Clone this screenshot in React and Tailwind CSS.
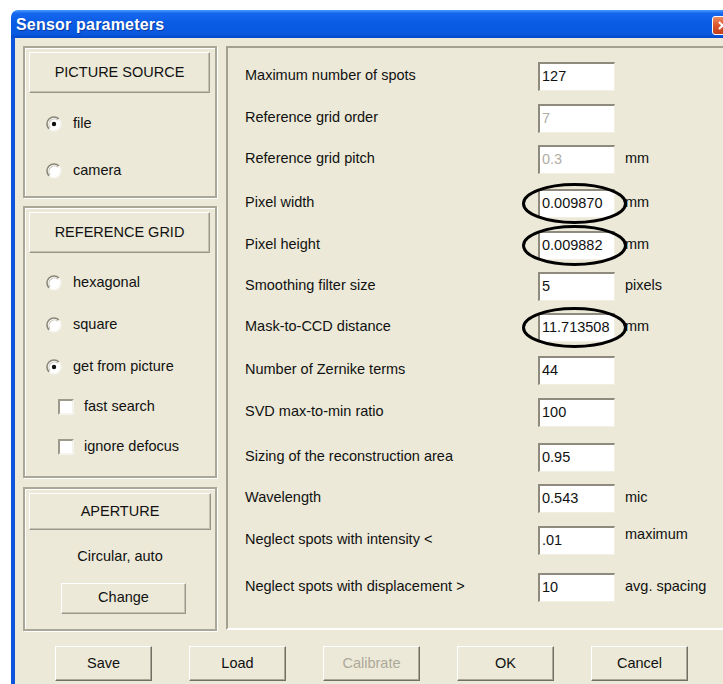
import React from 'react';

const rows = [
  { label: 'Maximum number of spots', value: '127', mt: 'mt-[13px]' },
  { label: 'Reference grid order', value: '7', disabled: true, mt: 'mt-[12px]' },
  { label: 'Reference grid pitch', value: '0.3', disabled: true, unit: 'mm', mt: 'mt-[11px]' },
  { label: 'Pixel width', value: '0.009870', unit: 'mm', ring: true, mt: 'mt-[14px]' },
  { label: 'Pixel height', value: '0.009882', unit: 'mm', ring: true, mt: 'mt-[12px]' },
  { label: 'Smoothing filter size', value: '5', unit: 'pixels', mt: 'mt-[11px]' },
  { label: 'Mask-to-CCD distance', value: '11.713508', unit: 'mm', ring: true, mt: 'mt-[11px]' },
  { label: 'Number of Zernike terms', value: '44', mt: 'mt-[13px]' },
  { label: 'SVD max-to-min ratio', value: '100', mt: 'mt-[12px]' },
  { label: 'Sizing of the reconstruction area', value: '0.95', mt: 'mt-[15px]' },
  { label: 'Wavelength', value: '0.543', unit: 'mic', mt: 'mt-[11px]' },
  { label: 'Neglect spots with intensity <', value: '.01', unit: 'maximum', raised: true, mt: 'mt-[12px]' },
  { label: 'Neglect spots with displacement >', value: '10', unit: 'avg. spacing', mt: 'mt-[17px]' },
];

function Radio({ checked }) {
  return (
    <svg width="16" height="16" viewBox="0 0 16 16" className="shrink-0">
      <circle cx="8" cy="8" r="7" fill="#fff" />
      <path d="M3.05 12.95 A7 7 0 0 1 12.95 3.05" stroke="#8a877a" strokeWidth="1.6" fill="none" />
      <path d="M4.2 11.8 A5.4 5.4 0 0 1 11.8 4.2" stroke="#c9c6b8" strokeWidth="1.1" fill="none" />
      <path d="M12.95 3.05 A7 7 0 0 1 3.05 12.95" stroke="#f4f3ec" strokeWidth="1.6" fill="none" />
      {checked && <circle cx="8" cy="8" r="2.2" fill="#111" />}
    </svg>
  );
}

function Checkbox() {
  return (
    <span className="block w-[16px] h-[16px] shrink-0 bg-white border-2 border-t-[#9d9a8c] border-l-[#9d9a8c] border-r-[#f4f3ee] border-b-[#f4f3ee]" />
  );
}

function HeaderButton({ children, className }) {
  return (
    <div
      className={
        'flex items-center justify-center bg-[#ece9d8] border border-t-white border-l-white border-r-[#9a978a] border-b-[#9a978a] shadow-[inset_-1px_-1px_0_#c4c1b2] ' +
        className
      }
    >
      {children}
    </div>
  );
}

function Group({ className, children }) {
  return (
    <div
      className={
        'flex flex-col border-2 border-[#aaa799] shadow-[inset_1px_1px_0_#fff,1px_1px_0_#fff] ' + className
      }
    >
      {children}
    </div>
  );
}

function PushButton({ children, disabled }) {
  return (
    <div
      className={
        'w-[97px] h-[35px] flex items-center justify-center bg-[#ece9d8] border border-t-white border-l-white border-r-[#716f64] border-b-[#716f64] shadow-[inset_-1px_-1px_0_#aca899] ' +
        (disabled ? 'text-[#aca899]' : 'text-[#111]')
      }
    >
      {children}
    </div>
  );
}

function Ring() {
  return (
    <svg
      width="110"
      height="45"
      viewBox="0 0 110 45"
      className="pointer-events-none absolute left-[-18px] top-[-8px]"
    >
      <ellipse cx="54.5" cy="22.5" rx="51" ry="19" fill="none" stroke="#000" strokeWidth="3" />
    </svg>
  );
}

export default function App() {
  return (
    <div className="w-[723px] h-[684px] overflow-hidden bg-white font-['Liberation_Sans',Arial,sans-serif] text-[14.5px] text-[#111]">
      <div className="h-[10px]" />
      <div className="flex h-[674px]">
        <div className="w-[11px] shrink-0" />
        <div className="w-[727px] shrink-0 flex flex-col">
          {/* title bar */}
          <div className="h-[28px] shrink-0 flex items-center pl-[5px] pr-[5px] rounded-tl-[7px] bg-[linear-gradient(180deg,#4a9cff_0%,#1567ee_12%,#0a5ce6_45%,#0858e0_85%,#0447c8_100%)]">
            <span className="pt-[2px] font-['Liberation_Sans',Arial,sans-serif] font-bold text-[16px] text-white tracking-[0.2px] [text-shadow:1px_1px_0_#0a3a9c]">
              Sensor parameters
            </span>
            <div className="ml-auto mt-[2px] w-[21px] h-[19px] rounded-[3px] border border-white bg-[linear-gradient(180deg,#ec8a62_0%,#d9552c_50%,#c2401b_100%)] flex items-center justify-center">
              <svg width="11" height="11" viewBox="0 0 11 11">
                <path d="M2 2 L9 9 M9 2 L2 9" stroke="#fff" strokeWidth="2" />
              </svg>
            </div>
          </div>

          {/* dialog body */}
          <div className="flex-1 flex flex-col bg-[#ece9d8] border-l-4 border-[#0c55dc] pl-[8px] pt-[8px]">
            <div className="flex">
              {/* left column */}
              <div className="w-[194px] shrink-0 flex flex-col">
                <Group className="h-[152px] px-[4px] pt-[4px]">
                  <HeaderButton className="w-[181px] h-[41px]">PICTURE SOURCE</HeaderButton>
                  <div className="flex flex-col gap-[31px] mt-[23px] pl-[17px]">
                    <div className="flex items-center h-[16px] gap-[11px]">
                      <Radio checked />
                      <span>file</span>
                    </div>
                    <div className="flex items-center h-[16px] gap-[11px]">
                      <Radio />
                      <span>camera</span>
                    </div>
                  </div>
                </Group>

                <Group className="mt-[8px] h-[272px] px-[4px] pt-[4px]">
                  <HeaderButton className="w-[181px] h-[41px]">REFERENCE GRID</HeaderButton>
                  <div className="flex flex-col mt-[22px] pl-[17px]">
                    <div className="flex items-center h-[16px] gap-[11px]">
                      <Radio />
                      <span>hexagonal</span>
                    </div>
                    <div className="flex items-center h-[16px] gap-[11px] mt-[26px]">
                      <Radio />
                      <span>square</span>
                    </div>
                    <div className="flex items-center h-[16px] gap-[11px] mt-[26px]">
                      <Radio checked />
                      <span>get from picture</span>
                    </div>
                    <div className="flex items-center h-[16px] gap-[10px] mt-[24px] pl-[12px]">
                      <Checkbox />
                      <span>fast search</span>
                    </div>
                    <div className="flex items-center h-[16px] gap-[10px] mt-[24px] pl-[12px]">
                      <Checkbox />
                      <span>ignore defocus</span>
                    </div>
                  </div>
                </Group>

                <Group className="mt-[9px] h-[144px] px-[4px] pt-[4px] items-start">
                  <HeaderButton className="w-[182px] h-[37px]">APERTURE</HeaderButton>
                  <div className="w-[182px] text-center mt-[16px]">Circular, auto</div>
                  <div className="ml-[32px] mt-[15px]">
                    <HeaderButton className="w-[125px] h-[31px]">Change</HeaderButton>
                  </div>
                </Group>
              </div>

              {/* right parameters panel */}
              <div className="ml-[9px] w-[510px] shrink-0 h-[584px] flex flex-col border-2 border-t-[#a3a092] border-l-[#a3a092] border-r-white border-b-white pl-[17px]">
                {rows.map((r) => (
                  <div key={r.label} className={'flex items-center h-[30px] ' + r.mt}>
                    <span className="w-[293px] shrink-0">{r.label}</span>
                    <div className="relative w-[77px] h-[29px] shrink-0">
                      <div className="w-full h-full bg-white flex items-center pl-[2px] border-t-2 border-l-2 border-t-[#8e8b7e] border-l-[#8e8b7e] border-r border-b border-r-[#f1efe2] border-b-[#f1efe2]">
                        <span className={r.disabled ? 'text-[#b0aea4]' : 'text-[#111]'}>{r.value}</span>
                      </div>
                      {r.ring && <Ring />}
                    </div>
                    {r.unit && (
                      <span className={'ml-[10px] ' + (r.raised ? 'mb-[10px]' : '')}>{r.unit}</span>
                    )}
                  </div>
                ))}
              </div>
            </div>

            {/* bottom buttons */}
            <div className="flex gap-[37px] ml-[32px] mt-[15px]">
              <PushButton>Save</PushButton>
              <PushButton>Load</PushButton>
              <PushButton disabled>Calibrate</PushButton>
              <PushButton>OK</PushButton>
              <PushButton>Cancel</PushButton>
            </div>
          </div>
        </div>
      </div>
    </div>
  );
}
